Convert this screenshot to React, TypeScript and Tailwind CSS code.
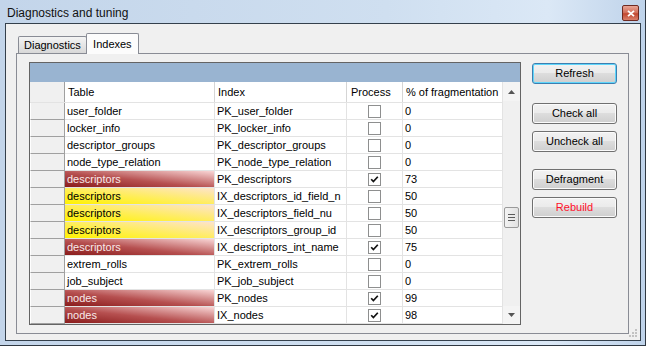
import React from "react";

type Tone = "none" | "red" | "yellow";

type IndexRow = {
  table: string;
  index: string;
  process: boolean;
  frag: number;
  tone: Tone;
};

// index names are cut where the column ends, as the grid shows them
const rows: IndexRow[] = [
  { table: "user_folder", index: "PK_user_folder", process: false, frag: 0, tone: "none" },
  { table: "locker_info", index: "PK_locker_info", process: false, frag: 0, tone: "none" },
  { table: "descriptor_groups", index: "PK_descriptor_groups", process: false, frag: 0, tone: "none" },
  { table: "node_type_relation", index: "PK_node_type_relation", process: false, frag: 0, tone: "none" },
  { table: "descriptors", index: "PK_descriptors", process: true, frag: 73, tone: "red" },
  { table: "descriptors", index: "IX_descriptors_id_field_n", process: false, frag: 50, tone: "yellow" },
  { table: "descriptors", index: "IX_descriptors_field_nu", process: false, frag: 50, tone: "yellow" },
  { table: "descriptors", index: "IX_descriptors_group_id", process: false, frag: 50, tone: "yellow" },
  { table: "descriptors", index: "IX_descriptors_int_name", process: true, frag: 75, tone: "red" },
  { table: "extrem_rolls", index: "PK_extrem_rolls", process: false, frag: 0, tone: "none" },
  { table: "job_subject", index: "PK_job_subject", process: false, frag: 0, tone: "none" },
  { table: "nodes", index: "PK_nodes", process: true, frag: 99, tone: "red" },
  { table: "nodes", index: "IX_nodes", process: true, frag: 98, tone: "red" },
];

const toneClass: Record<Tone, string> = {
  none: "bg-white text-black",
  red: "bg-[linear-gradient(to_top_right,#8a1c1c,#b65050_45%,#f9d6d6)] text-[#f8eaea]",
  yellow: "bg-[linear-gradient(to_top_right,#fff200,#ffee55_45%,#fde3cc)] text-black",
};

function CheckBox({ checked }: { checked: boolean }) {
  return (
    <div className="w-[13px] h-[13px] border border-[#8e8f8f] bg-white flex items-center justify-center">
      {checked && (
        <svg width="9" height="9" viewBox="0 0 9 9">
          <path d="M1.2 4.2 L3.4 6.6 L7.8 1.8" fill="none" stroke="#111" strokeWidth="1.7" />
        </svg>
      )}
    </div>
  );
}

function WinButton({
  label,
  focused,
  danger,
  className,
}: {
  label: string;
  focused?: boolean;
  danger?: boolean;
  className?: string;
}) {
  return (
    <button
      type="button"
      className={
        "w-[85px] h-[21px] rounded-[3px] border text-[11px] leading-none bg-[linear-gradient(#f2f2f2,#ebebeb_45%,#dddddd_50%,#cfcfcf)] " +
        (focused
          ? "border-[#3c7fb1] shadow-[inset_0_0_0_1px_#5fd6fb] "
          : "border-[#707070] shadow-[inset_0_0_0_1px_#fbfbfb] ") +
        (danger ? "text-[#ff0f2a] " : "text-black ") +
        (className ?? "")
      }
    >
      {label}
    </button>
  );
}

function ScrollBar() {
  return (
    <div className="w-[18px] flex flex-col bg-[#f0f0f0] border-l border-[#e3e3e3]">
      <div className="h-[19px] flex items-center justify-center bg-[#f4f4f4]">
        <svg width="7" height="4" viewBox="0 0 7 4">
          <path d="M0 4 L3.5 0 L7 4 Z" fill="#555" />
        </svg>
      </div>
      <div className="h-[106px]" />
      <div className="mx-[1px] h-[21px] rounded-[2px] border border-[#9a9a9a] bg-[linear-gradient(90deg,#f3f3f3,#e2e2e2)] flex flex-col items-center justify-center gap-[2px]">
        <div className="w-[7px] h-px bg-[#5a5a5a]" />
        <div className="w-[7px] h-px bg-[#5a5a5a]" />
        <div className="w-[7px] h-px bg-[#5a5a5a]" />
      </div>
      <div className="flex-1" />
      <div className="h-[18px] flex items-center justify-center bg-[#f4f4f4]">
        <svg width="7" height="4" viewBox="0 0 7 4">
          <path d="M0 0 L7 0 L3.5 4 Z" fill="#555" />
        </svg>
      </div>
    </div>
  );
}

function IndexGrid() {
  return (
    <div className="w-[492px] h-[263px] border border-[#646464] flex flex-col bg-white">
      <div className="h-[19px] bg-[#99b4d1]" />
      <div className="flex flex-1 min-h-0">
        <div className="w-[472px] flex flex-col">
          <div className="h-[21px] flex border-b border-[#e3e3e3]">
            <div className="w-[35px] bg-[#f0f0f0] border-r border-[#a0a0a0]" />
            <div className="w-[150px] pl-[3px] flex items-center border-r border-[#d5d5d5]">Table</div>
            <div className="w-[132px] pl-[3px] flex items-center border-r border-[#d5d5d5]">Index</div>
            <div className="w-[56px] pl-[4px] flex items-center border-r border-[#d5d5d5]">Process</div>
            <div className="w-[99px] pl-[3px] flex items-center">% of fragmentation</div>
          </div>
          {rows.map((r, i) => (
            <div key={i} className="h-[17px] flex">
              <div className="w-[35px] bg-[#f0f0f0] border-r border-b border-[#a0a0a0] border-l border-l-white" />
              <div
                className={
                  "w-[150px] pl-[2px] flex items-center whitespace-nowrap border-r border-b border-[#e3e3e3] " +
                  toneClass[r.tone]
                }
              >
                {r.table}
              </div>
              <div className="w-[132px] pl-[2px] flex items-center whitespace-nowrap border-r border-b border-[#e3e3e3]">
                {r.index}
              </div>
              <div className="w-[56px] flex items-center justify-center border-r border-b border-[#e3e3e3]">
                <CheckBox checked={r.process} />
              </div>
              <div className="w-[99px] pl-[2px] flex items-center border-b border-[#e3e3e3]">{r.frag}</div>
            </div>
          ))}
        </div>
        <ScrollBar />
      </div>
    </div>
  );
}

export default function App() {
  return (
    <div
      className="w-[646px] h-[346px] flex flex-col border-r border-b border-[#2f3842] bg-[linear-gradient(90deg,#c3d5ea,#cfdff0_60%,#dbe8f6_85%,#bfd3ea)] text-[11px] text-black"
      style={{ fontFamily: '"Liberation Sans", Arial, sans-serif' }}
    >
      {/* title bar */}
      <div className="h-[23px] flex items-center pl-[7px] pr-[6px]">
        <span className="flex-1 pt-[3px] text-[12px] text-[#111]">Diagnostics and tuning</span>
        <div className="w-[17px] h-[16px] mt-[3px] rounded-[2px] border border-[#6e2a22] bg-[linear-gradient(#e9a595,#cf6a56_50%,#c0452e_55%,#d9806b)] flex items-center justify-center">
          <svg width="8" height="7" viewBox="0 0 8 7">
            <path d="M1 0.8 L7 6.2 M7 0.8 L1 6.2" stroke="#fff" strokeWidth="1.8" />
          </svg>
        </div>
      </div>

      {/* client area */}
      <div className="relative flex-1 ml-[5px] mr-[4px] mb-[4px] border border-[#34404c] bg-[#f0f0f0] pt-[9px] pl-[10px] pr-[11px] pb-[6px] flex flex-col">
        <div className="flex items-end h-[20px] pl-[2px]">
          <div className="h-[17px] px-[5px] pt-px flex items-center border border-b-0 border-[#898c95] rounded-t-[2px] bg-[linear-gradient(#f4f4f4,#e6e6e6_50%,#d8d8d8)]">
            Diagnostics
          </div>
          <div className="relative z-10 -mb-px h-[21px] w-[53px] -ml-px flex items-center justify-center border border-b-0 border-[#898c95] rounded-t-[2px] bg-[#fcfcfc]">
            Indexes
          </div>
        </div>
        <div className="flex-1 border border-[#898c95] bg-[#f0f0f0] pl-[12px] pt-[8px] flex items-start">
          <IndexGrid />
          <div className="ml-[11px] mt-[1px] flex flex-col">
            <WinButton label="Refresh" focused />
            <WinButton label="Check all" className="mt-[19px]" />
            <WinButton label="Uncheck all" className="mt-[7px]" />
            <WinButton label="Defragment" className="mt-[17px]" />
            <WinButton label="Rebuild" danger className="mt-[7px]" />
          </div>
        </div>
        <svg className="absolute right-[2px] bottom-[2px]" width="10" height="10" viewBox="0 0 10 10">
          <rect x="7" y="1" width="2" height="2" fill="#c2c2c2" />
          <rect x="4" y="4" width="2" height="2" fill="#c2c2c2" />
          <rect x="7" y="4" width="2" height="2" fill="#c2c2c2" />
          <rect x="1" y="7" width="2" height="2" fill="#c2c2c2" />
          <rect x="4" y="7" width="2" height="2" fill="#c2c2c2" />
          <rect x="7" y="7" width="2" height="2" fill="#c2c2c2" />
        </svg>
      </div>
    </div>
  );
}
